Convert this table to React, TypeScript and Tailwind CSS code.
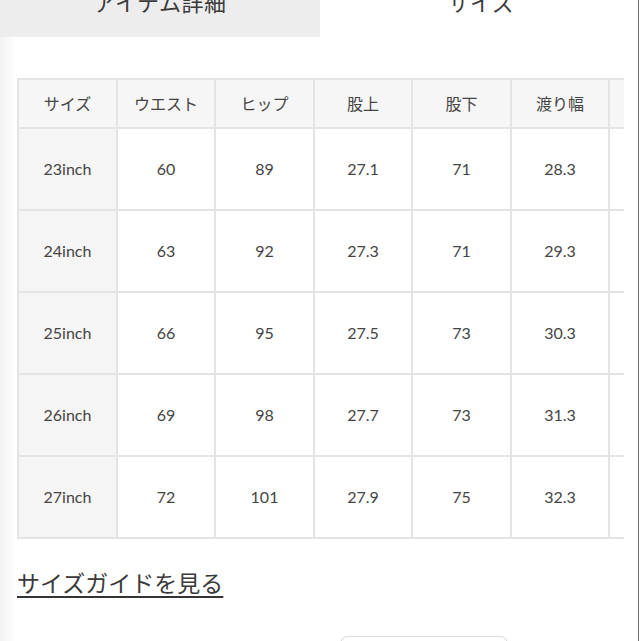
import React from "react";

const headers = ["サイズ", "ウエスト", "ヒップ", "股上", "股下", "渡り幅", "裾幅"];
const rows = [
  ["23inch", "60", "89", "27.1", "71", "28.3", "16.5"],
  ["24inch", "63", "92", "27.3", "71", "29.3", "17"],
  ["25inch", "66", "95", "27.5", "73", "30.3", "17.5"],
  ["26inch", "69", "98", "27.7", "73", "31.3", "18"],
  ["27inch", "72", "101", "27.9", "75", "32.3", "18.5"],
];

export default function App() {
  return (
    <div
      className="w-[641px] h-[641px] overflow-hidden bg-white flex text-[#3a3a3a]"
      style={{ fontFamily: 'Lato, "Noto Sans CJK JP", sans-serif' }}
    >
      <div className="w-[639px] h-full border-r border-[#6e6e6e] flex flex-col">
        {/* tabs */}
        <div className="flex h-[37px] shrink-0">
          <div className="w-[320px] bg-[#ededed] flex justify-center overflow-hidden">
            <span className="text-[22px] leading-[22px] mt-[-8px] tracking-[0.5px]">アイテム詳細</span>
          </div>
          <div className="flex-1 flex justify-center overflow-hidden pl-[4px]">
            <span className="text-[22px] leading-[22px] mt-[-8px] tracking-[0.5px]">サイズ</span>
          </div>
        </div>
        <div className="flex flex-1">
          <div className="w-[17px] bg-gradient-to-r from-[#f2f2f2] to-white shrink-0" />
          <div className="flex flex-col">
            <div className="mt-[41px] w-[607px] overflow-hidden">
              <div className="grid grid-cols-[99px_98px_99px_98px_99px_98px_99px] w-[690px] border-t-2 border-l-2 border-[#e4e4e4]">
                {headers.map((h, i) => (
                  <div
                    key={h}
                    className="h-[49px] bg-[#f6f6f6] border-r-2 border-b-2 border-[#e4e4e4] flex items-center justify-center text-[16px] text-[#444]"
                  >
                    <span className={i === 6 ? "opacity-0" : ""}>{h}</span>
                  </div>
                ))}
                {rows.map((r) =>
                  r.map((c, i) => (
                    <div
                      key={r[0] + i}
                      className={
                        "h-[82px] border-r-2 border-b-2 border-[#e4e4e4] flex items-center justify-center text-[16px] text-[#444] " +
                        (i === 0 ? "bg-[#f5f5f5]" : "bg-white")
                      }
                    >
                      <span className={i === 6 ? "opacity-0" : ""}>{c}</span>
                    </div>
                  ))
                )}
              </div>
            </div>
            <div className="mt-[29px]">
              <span className="text-[23px] leading-[30px] underline underline-offset-[4px] decoration-[2px] decoration-[#333]">
                サイズガイドを見る
              </span>
            </div>
            <div className="flex mt-[38px] pl-[323px]">
              <div className="w-[168px] h-[30px] rounded-lg border border-[#dcdcdc] bg-white shadow-sm" />
            </div>
          </div>
        </div>
      </div>
    </div>
  );
}
